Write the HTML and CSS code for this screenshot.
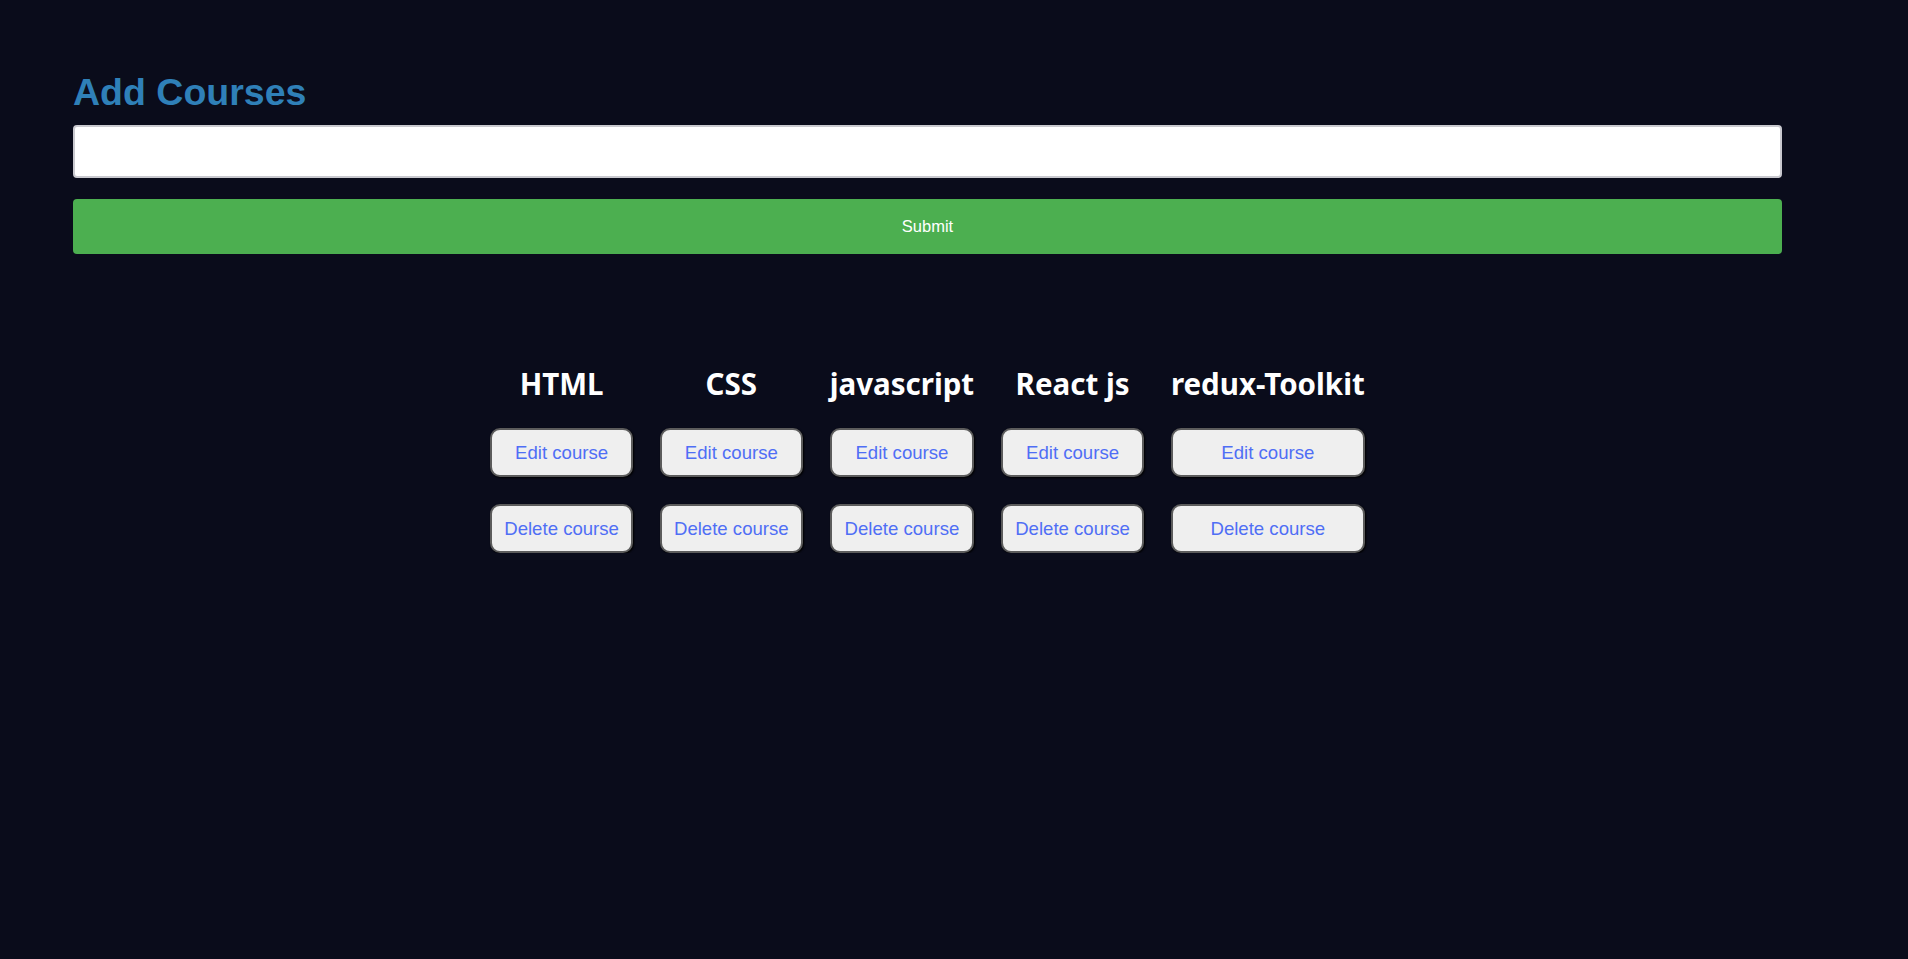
FILE: index.html
```html
<!DOCTYPE html>
<html lang="en">
<head>
<meta charset="utf-8">
<title>Add Courses</title>
<link rel="stylesheet" href="styles.css">
</head>
<body>
<div class="app">
  <form class="add-form">
    <h1 class="form-title">Add Courses</h1>
    <input class="course-input" type="text">
    <button class="submit-btn" type="button">Submit</button>
  </form>
  <div class="courses">
    <div class="course">
      <h3 class="course-name">HTML</h3>
      <button class="course-btn" type="button">Edit course</button>
      <button class="course-btn" type="button">Delete course</button>
    </div>
    <div class="course">
      <h3 class="course-name">CSS</h3>
      <button class="course-btn" type="button">Edit course</button>
      <button class="course-btn" type="button">Delete course</button>
    </div>
    <div class="course">
      <h3 class="course-name">javascript</h3>
      <button class="course-btn" type="button">Edit course</button>
      <button class="course-btn" type="button">Delete course</button>
    </div>
    <div class="course">
      <h3 class="course-name">React js</h3>
      <button class="course-btn" type="button">Edit course</button>
      <button class="course-btn" type="button">Delete course</button>
    </div>
    <div class="course">
      <h3 class="course-name">redux-Toolkit</h3>
      <button class="course-btn" type="button">Edit course</button>
      <button class="course-btn" type="button">Delete course</button>
    </div>
  </div>
</div>
</body>
</html>
```

FILE: styles.css
```css
html, body {
  margin: 0;
  padding: 0;
  background: #0a0c1b;
  min-height: 100%;
}
body {
  font-family: "Liberation Sans", Arial, sans-serif;
}
.app {
  width: 1709px;
  margin-left: 73px;
  padding-top: 71px;
}
.add-form {
  display: flex;
  flex-direction: column;
}
.form-title {
  margin: 0 0 11px 0;
  font-size: 37.5px;
  line-height: 43px;
  font-weight: 700;
  color: #2f80b8;
}
.course-input {
  box-sizing: border-box;
  height: 53px;
  width: 100%;
  border: 2px solid #c9c9cf;
  border-radius: 4px;
  background: #fff;
  margin: 0;
  padding: 0 12px;
  font-size: 18px;
}
.submit-btn {
  margin-top: 21px;
  height: 55px;
  width: 100%;
  border: none;
  border-radius: 4px;
  background: #4caf50;
  color: #fff;
  font-family: "Liberation Sans", Arial, sans-serif;
  font-size: 16.5px;
}
.courses {
  display: flex;
  justify-content: center;
  gap: 27px;
  margin-top: 110px;
}
.course {
  display: flex;
  flex-direction: column;
  align-items: stretch;
}
.course-name {
  margin: 0 0 24px 0;
  text-align: center;
  font-family: "Noto Sans", "Open Sans", sans-serif;
  font-weight: 700;
  font-size: 29.5px;
  line-height: 40px;
  color: #fff;
}
.course-btn {
  box-sizing: border-box;
  height: 49px;
  padding: 1px 12px 0;
  border: 2px solid #5c5c5c;
  border-radius: 10px;
  background: #efefef;
  box-shadow: 1px 1px 2px #000;
  color: #4f6ef5;
  font-family: "Liberation Sans", Arial, sans-serif;
  font-size: 18.6px;
  white-space: nowrap;
}
.course-btn + .course-btn {
  margin-top: 27px;
}
```
